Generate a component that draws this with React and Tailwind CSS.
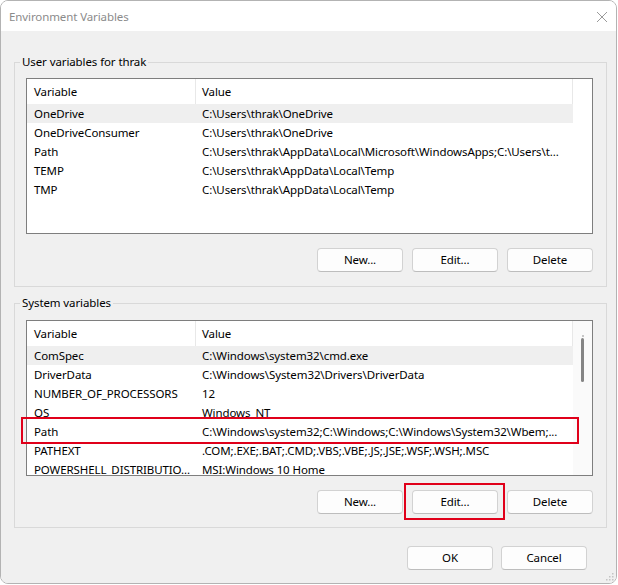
import React from "react";

const userVars = [
  ["OneDrive", "C:\\Users\\thrak\\OneDrive"],
  ["OneDriveConsumer", "C:\\Users\\thrak\\OneDrive"],
  ["Path", "C:\\Users\\thrak\\AppData\\Local\\Microsoft\\WindowsApps;C:\\Users\\t..."],
  ["TEMP", "C:\\Users\\thrak\\AppData\\Local\\Temp"],
  ["TMP", "C:\\Users\\thrak\\AppData\\Local\\Temp"],
];

const sysVars = [
  ["ComSpec", "C:\\Windows\\system32\\cmd.exe"],
  ["DriverData", "C:\\Windows\\System32\\Drivers\\DriverData"],
  ["NUMBER_OF_PROCESSORS", "12"],
  ["OS", "Windows_NT"],
  ["Path", "C:\\Windows\\system32;C:\\Windows;C:\\Windows\\System32\\Wbem;..."],
  ["PATHEXT", ".COM;.EXE;.BAT;.CMD;.VBS;.VBE;.JS;.JSE;.WSF;.WSH;.MSC"],
  ["POWERSHELL_DISTRIBUTIO...", "MSI:Windows 10 Home"],
];

function Btn({ children, highlight = false }) {
  return (
    <div className="relative">
      <button className="w-[86px] h-[24px] bg-[#fdfdfd] border border-[#d2d2d2] border-b-[#bdbdbd] rounded-[4px] text-[11.5px] leading-[16px] text-black flex items-center justify-center">
        {children}
      </button>
      {highlight && (
        <span className="absolute -left-[8px] -top-[7px] -right-[7px] -bottom-[6px] border-2 border-[#e0001a] pointer-events-none" />
      )}
    </div>
  );
}

function List({ rows, scroll = false }) {
  return (
    <div className="w-[567px] h-[156px] border border-[#7e7e7e] bg-white flex overflow-hidden">
      <div className="w-[546px] flex flex-col">
        <div className="h-[25px] flex shrink-0">
          <div className="w-[169px] pl-[7px] flex items-center border-r border-[#e8e8e8]">Variable</div>
          <div className="flex-1 pl-[6px] flex items-center border-r border-[#e8e8e8]">Value</div>
        </div>
        {rows.map(([k, v], i) => (
          <div
            key={i}
            className={`h-[19px] shrink-0 flex items-center ${i === 0 ? "bg-[#efefef]" : ""}`}
          >
            <div className="w-[169px] pl-[7px] whitespace-nowrap overflow-hidden">{k}</div>
            <div className="flex-1 pl-[6px] whitespace-nowrap overflow-hidden">{v}</div>
          </div>
        ))}
      </div>
      <div className={`flex-1 flex flex-col items-center ${scroll ? "bg-[#fafafa]" : ""}`}>
        {scroll && (
          <>
            <div className="mt-[14px] w-[2px] h-[2px] bg-[#b5b5b5] rounded-full" />
            <div className="mt-[1px] w-[3px] h-[44px] bg-[#858585] rounded-full" />
          </>
        )}
      </div>
    </div>
  );
}

export default function App() {
  return (
    <div
      className="w-[618px] h-[585px] bg-white text-[11.5px] tracking-[-0.1px] text-black"
      style={{ fontFamily: "'Segoe UI', 'Noto Sans', sans-serif" }}
    >
      <div className="w-[617px] h-[584px] border border-[#b3b3b3] rounded-[8px] overflow-hidden flex flex-col">
        {/* Title bar */}
        <div className="h-[30px] bg-white flex items-center justify-between shrink-0">
          <span className="pl-[8px] pt-[1px] text-[#8b8b8b]">Environment Variables</span>
          <svg width="12" height="12" viewBox="0 0 12 12" className="mr-[8px] mt-[1px]">
            <path d="M1 1 L11 11 M11 1 L1 11" stroke="#9a9a9a" strokeWidth="1" fill="none" />
          </svg>
        </div>

        {/* Content */}
        <div className="flex-1 bg-[#f0f0f0] pl-[13px] pt-[23px] flex flex-col">
          <fieldset className="w-[591px] border border-[#d9d9d9] pl-[11px] pr-[13px] pt-[8px] pb-[14px] m-0">
            <legend className="ml-[-6px] px-[2px] leading-[16px]">User variables for thrak</legend>
            <List rows={userVars} />
            <div className="mt-[14px] flex justify-end gap-[9px]">
              <Btn>New...</Btn>
              <Btn>Edit...</Btn>
              <Btn>Delete</Btn>
            </div>
          </fieldset>

          <fieldset className="mt-[8px] w-[591px] border border-[#d9d9d9] pl-[11px] pr-[13px] pt-[9px] pb-[13px] m-0">
            <legend className="ml-[-6px] px-[2px] leading-[16px]">System variables</legend>
            <div className="relative">
              <List rows={sysVars} scroll />
              <span className="absolute left-[-5px] top-[97px] w-[558px] h-[27px] border-2 border-[#e0001a] pointer-events-none" />
            </div>
            <div className="mt-[14px] flex justify-end gap-[9px]">
              <Btn>New...</Btn>
              <Btn highlight>Edit...</Btn>
              <Btn>Delete</Btn>
            </div>
          </fieldset>

          <div className="mt-[18px] w-[591px] pr-[18px] flex justify-end gap-[8px]">
            <Btn>OK</Btn>
            <Btn>Cancel</Btn>
          </div>

          <div className="flex-1 flex justify-end items-end pr-[2px] pb-[2px]">
            <svg width="8" height="8" viewBox="0 0 8 8">
              <rect x="6" y="0" width="1.5" height="1.5" fill="#c4c4c4" />
              <rect x="3" y="3" width="1.5" height="1.5" fill="#c4c4c4" />
              <rect x="6" y="3" width="1.5" height="1.5" fill="#c4c4c4" />
              <rect x="0" y="6" width="1.5" height="1.5" fill="#c4c4c4" />
              <rect x="3" y="6" width="1.5" height="1.5" fill="#c4c4c4" />
              <rect x="6" y="6" width="1.5" height="1.5" fill="#c4c4c4" />
            </svg>
          </div>
        </div>
      </div>
    </div>
  );
}
